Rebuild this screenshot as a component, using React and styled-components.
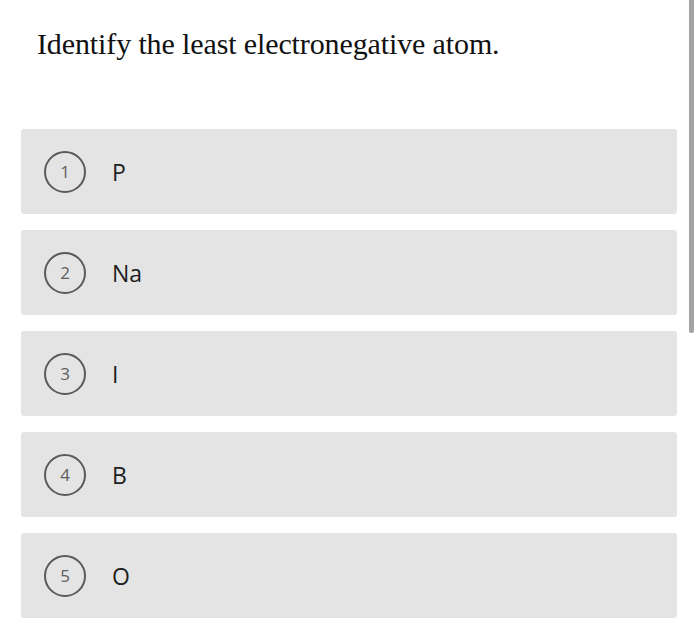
import React from "react";
import styled, { createGlobalStyle } from "styled-components";

const options = ["P", "Na", "I", "B", "O"];

const App = () => {
  return (
    <Page>
      <GlobalStyle />
      <Question>Identify the least electronegative atom.</Question>
      <OptionList>
        {options.map((label, i) => (
          <Option key={label}>
            <Badge>{i + 1}</Badge>
            <OptionLabel>{label}</OptionLabel>
          </Option>
        ))}
      </OptionList>
      <ScrollThumb />
    </Page>
  );
};

const GlobalStyle = createGlobalStyle`
  html, body {
    margin: 0;
    padding: 0;
    background: #fff;
  }
`;

const Page = styled.div`
  position: relative;
  width: 700px;
  height: 628px;
  overflow: hidden;
  padding: 0 23px 0 21px;
  box-sizing: border-box;
`;

const Question = styled.h1`
  margin: 0;
  padding: 26px 0 0 16px;
  font-family: "Liberation Serif", "Times New Roman", serif;
  font-size: 30px;
  font-weight: 400;
  line-height: 36px;
  letter-spacing: -0.12px;
  color: #111;
`;

const OptionList = styled.div`
  display: flex;
  flex-direction: column;
  gap: 16px;
  margin-top: 67px;
`;

const Option = styled.div`
  display: flex;
  align-items: center;
  height: 85px;
  padding: 0 23px;
  background: #e4e4e4;
  border-radius: 3px;
`;

const Badge = styled.div`
  flex: none;
  width: 38px;
  height: 38px;
  border: 2px solid #5a5a5a;
  border-radius: 50%;
  display: flex;
  align-items: center;
  justify-content: center;
  font-family: "Open Sans", sans-serif;
  font-size: 17px;
  color: #606060;
`;

const OptionLabel = styled.span`
  margin-left: 26px;
  font-family: "Open Sans", sans-serif;
  font-size: 23px;
  color: #1e1e1e;
`;

const ScrollThumb = styled.div`
  position: absolute;
  top: 0;
  left: 689px;
  width: 5px;
  height: 333px;
  background: #a3a3a3;
  border-radius: 0 0 2px 2px;
`;

export default App;
